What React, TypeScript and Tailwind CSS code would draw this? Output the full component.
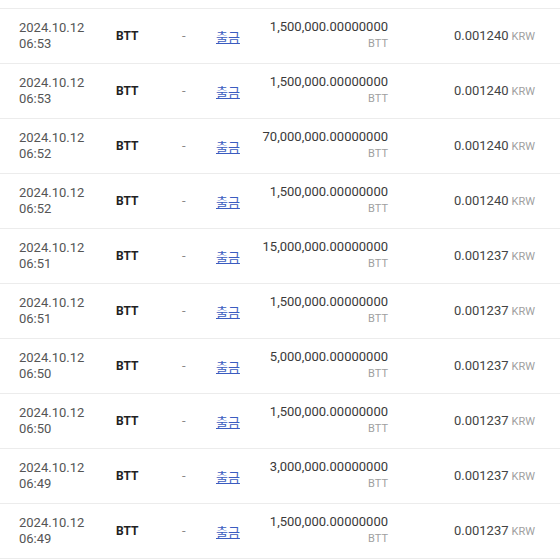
import React from "react";

const rows = [
    { date: "2024.10.12", time: "06:53", amount: "1,500,000.00000000", price: "0.001240" },
    { date: "2024.10.12", time: "06:53", amount: "1,500,000.00000000", price: "0.001240" },
    { date: "2024.10.12", time: "06:52", amount: "70,000,000.00000000", price: "0.001240" },
    { date: "2024.10.12", time: "06:52", amount: "1,500,000.00000000", price: "0.001240" },
    { date: "2024.10.12", time: "06:51", amount: "15,000,000.00000000", price: "0.001237" },
    { date: "2024.10.12", time: "06:51", amount: "1,500,000.00000000", price: "0.001237" },
    { date: "2024.10.12", time: "06:50", amount: "5,000,000.00000000", price: "0.001237" },
    { date: "2024.10.12", time: "06:50", amount: "1,500,000.00000000", price: "0.001237" },
    { date: "2024.10.12", time: "06:49", amount: "3,000,000.00000000", price: "0.001237" },
    { date: "2024.10.12", time: "06:49", amount: "1,500,000.00000000", price: "0.001237" },
];

const App = () => {
    return (
        <div className="w-[560px] h-[560px] bg-white overflow-hidden font-['Roboto','Noto_Sans_CJK_KR',sans-serif] text-[13px] leading-4 text-[#3a3a3a]">
            <div className="h-[9px] border-b border-[#ececec]" />
            {rows.map((r, i) => (
                <div
                    key={i}
                    className="flex items-center h-[55px] border-b border-[#ececec] pl-[19px]"
                >
                    {/* date */}
                    <div className="w-[97px] text-[#555]">
                        <div>{r.date}</div>
                        <div>{r.time}</div>
                    </div>
                    <div className="w-[64px] font-bold text-[12px] text-[#222]">BTT</div>
                    <div className="w-[36px] pl-[2px] text-[#888]">-</div>
                    <div className="w-[40px] pt-[3px]">
                        <a
                            href="#"
                            className="text-[#3b5cc0] underline font-['Noto_Sans_CJK_KR',sans-serif]"
                        >
                            출금
                        </a>
                    </div>
                    <div className="w-[132px] flex flex-col items-end">
                        <div>{r.amount}</div>
                        <div className="text-[11px] leading-[18px] text-[#a0a0a0]">BTT</div>
                    </div>
                    <div className="w-[147px] text-right text-[#444]">
                        {r.price}
                        <span className="text-[11px] text-[#a0a0a0] ml-[3px]">KRW</span>
                    </div>
                </div>
            ))}
        </div>
    );
};

export default App;
